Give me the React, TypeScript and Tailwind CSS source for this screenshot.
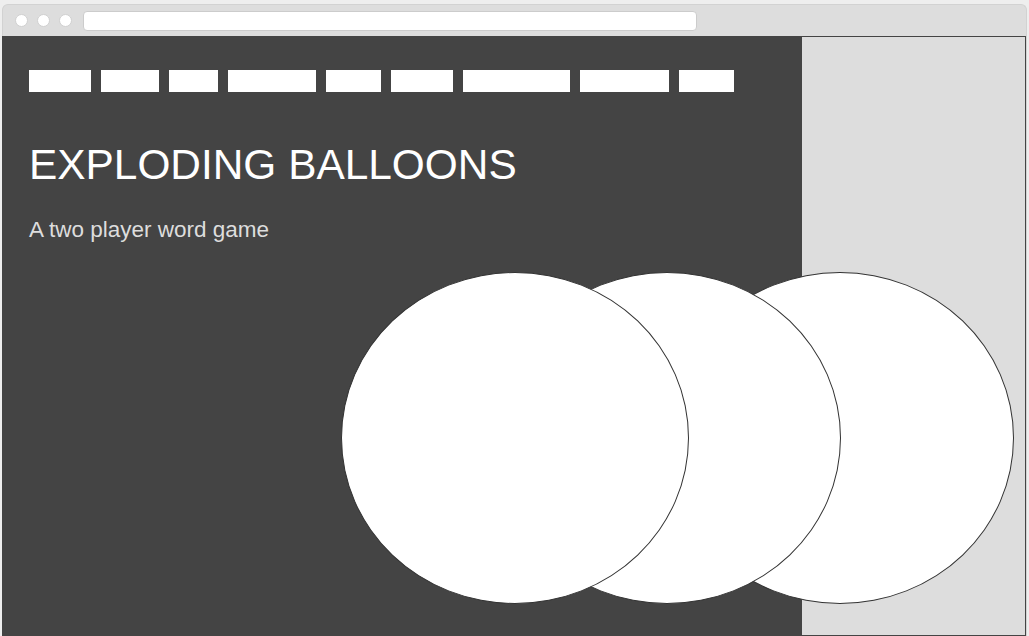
const navWidths = [62, 58, 49, 88, 55, 62, 107, 89, 55];

// back to front: the right-most balloon sits behind the others
const balloons = [
  "left-[663px] z-10",
  "left-[490px] z-20",
  "left-[338px] z-30",
];

export default function App() {
  return (
    <div className="w-[1029px] h-[636px] overflow-hidden bg-[#eeeeee] pt-[4px] pl-[2px] font-['Liberation_Sans',Arial,sans-serif]">
      <div className="w-[1025px] rounded-t-[6px] border-t border-x border-[#d2d2d2] bg-[#dddddd]">
        {/* Browser chrome */}
        <div className="h-[31px] flex items-center pl-[12px]">
          <div className="flex gap-[9px]">
            <span className="w-[13px] h-[13px] rounded-full bg-white border border-[#d0d0d0]" />
            <span className="w-[13px] h-[13px] rounded-full bg-white border border-[#d0d0d0]" />
            <span className="w-[13px] h-[13px] rounded-full bg-white border border-[#d0d0d0]" />
          </div>
          <div className="ml-[11px] w-[614px] h-[20px] rounded-[4px] bg-white border border-[#cccccc]" />
        </div>

        {/* Page */}
        <div className="relative h-[600px] flex border border-[#444444] -ml-px">
          <div className="w-[799px] bg-[#444444] pt-[33px] pl-[26px]">
            <nav className="flex gap-[10px]">
              {navWidths.map((w, i) => (
                <div key={i} className="h-[22px] bg-white" style={{ width: w }} />
              ))}
            </nav>
            <h1 className="mt-[52px] text-[42.4px] leading-none text-white">
              EXPLODING BALLOONS
            </h1>
            <p className="mt-[33px] text-[22.5px] leading-none text-[#dddddd]">
              A two player word game
            </p>
          </div>
          <div className="flex-1 bg-[#dddddd]" />

          {balloons.map((cls, i) => (
            <div
              key={i}
              className={`absolute top-[235px] w-[348px] h-[332px] rounded-[50%] bg-white border border-[#333333] ${cls}`}
            />
          ))}
        </div>
      </div>
    </div>
  );
}
